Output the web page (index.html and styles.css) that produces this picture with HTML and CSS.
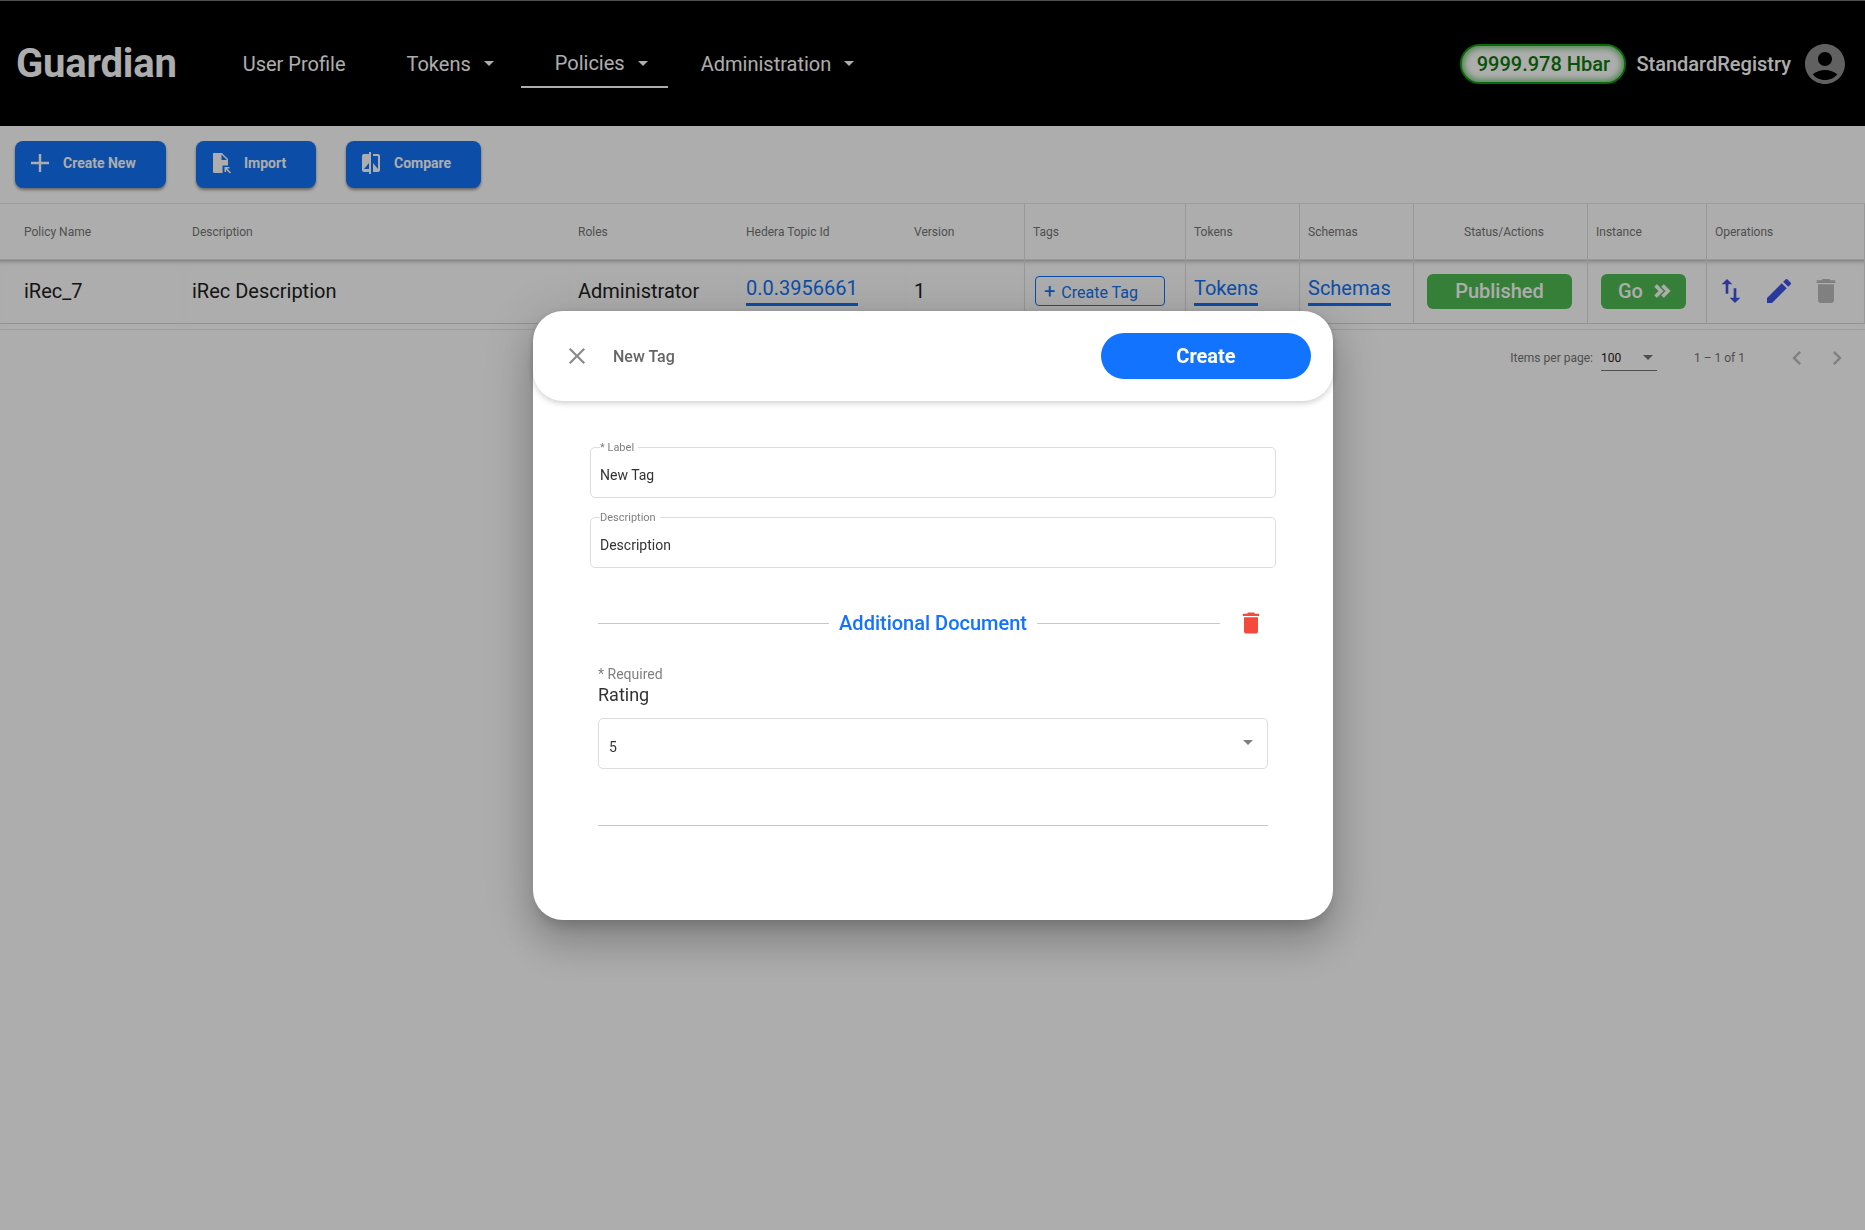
FILE: index.html
```html
<!DOCTYPE html>
<html lang="en">
  <head>
    <meta charset="UTF-8" />
    <title>Guardian</title>
    <link rel="stylesheet" href="styles.css">
  </head>
  <body>
    <header class="topbar">
      <div class="logo">Guardian</div>
      <nav class="nav">
        <a class="nav-item nav-profile">User Profile</a>
        <a class="nav-item nav-tokens">Tokens<span class="caret"></span></a>
        <a class="nav-item nav-policies">Policies<span class="caret"></span></a>
        <a class="nav-item nav-admin">Administration<span class="caret"></span></a>
      </nav>
      <div class="account">
        <div class="balance">9999.978 Hbar</div>
        <div class="username">StandardRegistry</div>
        <svg class="avatar" viewBox="2 2 20 20"><path d="M12 2C6.48 2 2 6.48 2 12s4.48 10 10 10 10-4.48 10-10S17.52 2 12 2zm0 4c1.93 0 3.5 1.57 3.5 3.5S13.93 13 12 13s-3.5-1.57-3.5-3.5S10.07 6 12 6zm0 14c-2.03 0-4.43-.82-6.14-2.88C7.55 15.8 9.68 15 12 15s4.45.8 6.14 2.12C16.43 19.18 14.03 20 12 20z"/></svg>
      </div>
    </header>

    <div class="toolbar">
      <button class="tool-btn btn-create" type="button">
        <svg viewBox="0 0 24 24"><path d="M21 13.200h-7.800V21h-2.400v-7.800H3v-2.400h7.800V3h2.400v7.800H21z"/></svg>
        Create New
      </button>
      <button class="tool-btn btn-import" type="button">
        <svg viewBox="0 0 24 24"><path fill-rule="evenodd" d="M4 2h9l6 6v6.500h-5.500V22H5.500C4.600 22 4 21.400 4 20.500zM12.500 3.500V9H18z"/><path d="M15.500 16h5v1.600h-2.300l3.800 3.800-1.100 1.100-3.800-3.800V21h-1.600z"/></svg>
        Import
      </button>
      <button class="tool-btn btn-compare" type="button">
        <svg viewBox="0 0 24 24"><path d="M10 3H5c-1.100 0-2 .9-2 2v14c0 1.100.9 2 2 2h5v2h2V1h-2v2zm0 15H5l5-6v6zm9-15h-5v2h5v13l-5-6v9h5c1.100 0 2-.9 2-2V5c0-1.100-.9-2-2-2z"/></svg>
        Compare
      </button>
    </div>

    <table class="policies">
      <colgroup>
        <col class="col-name" /><col class="col-desc" /><col class="col-roles" /><col class="col-topic" />
        <col class="col-version" /><col class="col-tags" /><col class="col-tokens" /><col class="col-schemas" />
        <col class="col-status" /><col class="col-instance" /><col class="col-ops" />
      </colgroup>
      <thead>
        <tr>
          <th class="first">Policy Name</th>
          <th>Description</th>
          <th>Roles</th>
          <th>Hedera Topic Id</th>
          <th>Version</th>
          <th class="cell-line">Tags</th>
          <th class="cell-line">Tokens</th>
          <th class="cell-line">Schemas</th>
          <th class="cell-line status-head">Status/Actions</th>
          <th class="cell-line">Instance</th>
          <th class="cell-line">Operations</th>
        </tr>
      </thead>
      <tbody>
        <tr>
          <td class="first">iRec_7</td>
          <td>iRec Description</td>
          <td>Administrator</td>
          <td><a class="link">0.0.3956661</a></td>
          <td>1</td>
          <td class="cell-line tags-cell">
            <button class="tag-btn" type="button"><span class="tag-plus">+</span> Create Tag</button>
          </td>
          <td class="cell-line"><a class="link">Tokens</a></td>
          <td class="cell-line"><a class="link">Schemas</a></td>
          <td class="cell-line status-cell"><button class="green-btn published" type="button">Published</button></td>
          <td class="cell-line instance-cell">
            <button class="green-btn go" type="button">
              Go
              <svg viewBox="0 0 24 24"><path d="M6.410 5L4 7.400 8.600 12 4 16.600 6.410 19l7-7z"/><path d="M14 5l-2.400 2.400 4.600 4.600-4.600 4.600L14 19l7-7z"/></svg>
            </button>
          </td>
          <td class="cell-line ops-cell">
            <div class="ops">
              <svg class="op-swap" viewBox="0 0 24 24"><path d="M16 17.010V10h-2v7.010h-3L15 21l4-3.990h-3zM9 3L5 6.990h3V14h2V6.990h3L9 3z"/></svg>
              <svg class="op-edit" viewBox="0 0 24 24"><path d="M3 17.250V21h3.750L17.810 9.940l-3.750-3.750L3 17.250zM20.710 7.040c.39-.39.39-1.020 0-1.410l-2.340-2.340c-.39-.39-1.020-.39-1.410 0l-1.830 1.830 3.750 3.750 1.830-1.830z"/></svg>
              <svg class="op-delete" viewBox="0 0 24 24"><path d="M6 19c0 1.100.9 2 2 2h8c1.100 0 2-.9 2-2V7H6v12zM19 4h-3.500l-1-1h-5l-1 1H5v2h14V4z"/></svg>
            </div>
          </td>
        </tr>
      </tbody>
    </table>

    <div class="paginator">
      <span class="page-label">Items per page:</span>
      <div class="page-size">100<span class="caret caret-dark"></span></div>
      <span class="page-range">1 – 1 of 1</span>
      <svg class="page-arrow" viewBox="0 0 24 24"><path d="M15.410 7.410L14 6l-6 6 6 6 1.410-1.410L10.830 12z"/></svg>
      <svg class="page-arrow" viewBox="0 0 24 24"><path d="M8.590 16.590L10 18l6-6-6-6-1.410 1.410L13.170 12z"/></svg>
    </div>

    <div class="backdrop"></div>

    <div class="modal">
      <div class="modal-head">
        <svg class="modal-close" viewBox="0 0 24 24"><path d="M19 6.410L17.590 5 12 10.590 6.410 5 5 6.410 10.590 12 5 17.590 6.410 19 12 13.410 17.590 19 19 17.590 13.410 12z"/></svg>
        <div class="modal-title">New Tag</div>
        <button class="create-btn" type="button">Create</button>
      </div>
      <div class="modal-body">
        <fieldset class="field">
          <legend>* Label</legend>
          <div class="field-value">New Tag</div>
        </fieldset>
        <fieldset class="field">
          <legend>Description</legend>
          <div class="field-value">Description</div>
        </fieldset>

        <div class="doc">
          <div class="doc-head">
            <div class="doc-line"></div>
            <div class="doc-title">Additional Document</div>
            <div class="doc-line doc-line-right"></div>
            <svg class="doc-delete" viewBox="0 0 24 24"><path d="M6 19c0 1.100.9 2 2 2h8c1.100 0 2-.9 2-2V7H6v12zM19 4h-3.500l-1-1h-5l-1 1H5v2h14V4z"/></svg>
          </div>
          <div class="required">* Required</div>
          <div class="rating">Rating</div>
          <div class="select">
            <span class="select-value">5</span>
            <span class="caret caret-gray"></span>
          </div>
          <div class="doc-end"></div>
        </div>
      </div>
    </div>
  </body>
</html>
```

FILE: styles.css
```css
html, body {
  margin: 0;
  height: 100%;
}
body {
  background-color: #fff;
  font-family: Roboto, "Liberation Sans", sans-serif;
  color: #212121;
  overflow: hidden;
}
button {
  font-family: inherit;
  border: none;
  cursor: pointer;
}

/* header */
.topbar {
  display: flex;
  align-items: center;
  height: 125px;
  background-color: #000;
  border-top: 1px solid #777;
  color: #fff;
}
.logo {
  margin-left: 16px;
  font-size: 40px;
  font-weight: 700;
  letter-spacing: -0.2px;
}
.nav {
  display: flex;
  align-self: stretch;
  align-items: center;
  margin-left: 66px;
}
.nav-item {
  display: flex;
  align-items: center;
  font-size: 20px;
}
.nav-tokens {
  margin-left: 61px;
}
.nav-policies {
  margin-left: 27px;
  padding: 0 20px 0 34px;
  height: 47px;
  margin-top: 1px;
  border-bottom: 2px solid #fff;
  box-sizing: border-box;
}
.nav-admin {
  margin-left: 33px;
}
.caret {
  display: inline-block;
  width: 0;
  height: 0;
  margin-left: 13px;
  border-top: 5px solid #fff;
  border-left: 5px solid transparent;
  border-right: 5px solid transparent;
}
.account {
  display: flex;
  align-items: center;
  margin-left: auto;
  margin-right: 20px;
}
.balance {
  box-sizing: border-box;
  width: 166px;
  height: 40px;
  line-height: 36px;
  text-align: center;
  font-size: 20px;
  font-weight: 500;
  color: #0a7a0a;
  background-color: #fff;
  border: 2px solid #0f9d0f;
  border-radius: 20px;
  box-shadow: inset 0 0 6px 2px #6fbf6f;
}
.username {
  margin-left: 10px;
  font-size: 20px;
  font-weight: 500;
}
.avatar {
  width: 40px;
  height: 40px;
  margin-left: 14px;
  fill: #8f8f8f;
}

/* toolbar */
.toolbar {
  display: flex;
  align-items: center;
  gap: 30px;
  box-sizing: border-box;
  height: 78px;
  padding: 0 15px;
  border-bottom: 1px solid #e6e6e6;
}
.tool-btn {
  display: flex;
  align-items: center;
  height: 47px;
  padding: 0 0 4px 13px;
  font-size: 14px;
  font-weight: 700;
  color: #fff;
  background-color: #1273f7;
  border-radius: 8px;
  box-shadow: 0 2px 3px rgba(0, 0, 0, 0.4);
}
.tool-btn svg {
  width: 24px;
  height: 24px;
  margin-right: 11px;
  fill: #fff;
}
.btn-create {
  width: 151px;
}
.btn-import {
  width: 120px;
}
.btn-compare {
  width: 135px;
}

/* table */
.policies {
  width: 100%;
  table-layout: fixed;
  border-collapse: separate;
  border-spacing: 0;
}
.col-name { width: 184px; }
.col-desc { width: 386px; }
.col-roles { width: 168px; }
.col-topic { width: 168px; }
.col-version { width: 118px; }
.col-tags { width: 161px; }
.col-tokens { width: 114px; }
.col-schemas { width: 114px; }
.col-status { width: 174px; }
.col-instance { width: 119px; }
.policies th {
  height: 56px;
  padding: 0 0 0 8px;
  box-sizing: border-box;
  text-align: left;
  font-size: 12px;
  font-weight: 400;
  color: #757575;
  border-bottom: 1px solid #e0e0e0;
}
.policies td {
  height: 64px;
  padding: 0 0 1px 8px;
  box-sizing: border-box;
  font-size: 20px;
  color: #212121;
  border-bottom: 1px solid #d8d8d8;
  box-shadow: inset 0 6px 5px -5px rgba(0, 0, 0, 0.35);
}
.policies .first {
  padding-left: 24px;
}
.policies .cell-line {
  border-left: 1px solid #e0e0e0;
}
.policies .status-head {
  padding-left: 50px;
}
.policies th:last-child,
.policies td:last-child {
  border-right: 1px solid #e0e0e0;
}
.link {
  display: inline-block;
  padding-bottom: 3px;
  color: #1273f7;
  border-bottom: 3px solid #1273f7;
}
.policies .tags-cell {
  padding-left: 10px;
}
.tag-btn {
  display: block;
  box-sizing: border-box;
  width: 130px;
  height: 30px;
  padding: 0 8px;
  text-align: left;
  font-size: 16px;
  color: #1273f7;
  background-color: #fff;
  border: 1px solid #1273f7;
  border-radius: 4px;
}
.tag-plus {
  font-size: 20px;
  margin-right: 2px;
}
.green-btn {
  display: flex;
  align-items: center;
  justify-content: center;
  height: 35px;
  padding: 0;
  font-size: 20px;
  font-weight: 500;
  color: #fff;
  background-color: #50bb55;
  border-radius: 6px;
}
.policies .status-cell {
  padding-left: 13px;
}
.published {
  width: 145px;
}
.policies .instance-cell {
  padding-left: 13px;
}
.go {
  width: 85px;
  gap: 8px;
  padding-left: 4px;
}
.go svg {
  width: 22px;
  height: 22px;
  fill: #fff;
  stroke: #fff;
  stroke-width: 0.8;
}
.ops {
  display: flex;
  align-items: center;
  gap: 15.5px;
}
.ops svg {
  width: 32px;
  height: 32px;
}
.op-swap,
.op-edit {
  fill: #3f51e8;
}
.op-delete {
  fill: #bdbdbd;
}

/* paginator */
.paginator {
  display: flex;
  align-items: center;
  height: 56px;
  margin-top: 5px;
  padding-right: 14px;
  justify-content: flex-end;
  border-top: 1px solid #e6e6e6;
  font-size: 12px;
  color: #757575;
}
.page-size {
  display: flex;
  align-items: center;
  justify-content: space-between;
  box-sizing: border-box;
  width: 56px;
  height: 26px;
  margin-left: 8px;
  padding: 0 4px 0 0;
  color: #212121;
  border-bottom: 1px solid #757575;
}
.caret-dark {
  border-top-color: #757575;
}
.page-range {
  margin-left: 37px;
  margin-right: 26px;
}
.page-arrow {
  width: 28px;
  height: 28px;
  margin-left: 12px;
  fill: #bdbdbd;
}

/* modal */
.backdrop {
  position: fixed;
  inset: 0;
  background-color: rgba(0, 0, 0, 0.32);
}
.modal {
  position: absolute;
  left: 533px;
  top: 311px;
  width: 800px;
  height: 609px;
  background-color: #fff;
  border-radius: 30px;
  box-shadow: 0 11px 15px -7px rgba(0, 0, 0, 0.2), 0 24px 38px 3px rgba(0, 0, 0, 0.14), 0 9px 46px 8px rgba(0, 0, 0, 0.12);
}
.modal-head {
  display: flex;
  align-items: center;
  box-sizing: border-box;
  height: 90px;
  padding: 0 22px 0 32px;
  border-radius: 30px;
  box-shadow: 0 2px 6px rgba(0, 0, 0, 0.2);
}
.modal-close {
  width: 24px;
  height: 24px;
  margin-right: 24px;
  fill: #8c8c8c;
  transform: scale(1.15);
}
.modal-title {
  font-size: 16px;
  font-weight: 500;
  color: #666;
}
.create-btn {
  width: 210px;
  height: 46px;
  margin-left: auto;
  font-size: 20px;
  font-weight: 700;
  color: #fff;
  background-color: #1173ff;
  border-radius: 23px;
}
.modal-body {
  padding: 41px 57px 0 57px;
}
.field {
  box-sizing: border-box;
  height: 56px;
  margin: 0 0 14px;
  padding: 0 9px;
  border: 1px solid #ddd;
  border-radius: 5px;
}
.field legend {
  margin-left: 0;
  padding: 0 4px 0 0;
  font-size: 11px;
  line-height: 11px;
  color: #808080;
}
.field-value {
  margin-top: 12px;
  font-size: 14px;
  line-height: 20px;
  color: #333;
}
.doc {
  padding: 0 8px;
}
.doc-head {
  display: flex;
  align-items: center;
  height: 30px;
  margin-top: 40px;
}
.doc-line {
  flex: 1;
  height: 1px;
  background-color: #c8c8c8;
}
.doc-line-right {
  flex: 0 0 183px;
}
.doc-title {
  margin: 0 10px;
  font-size: 20px;
  font-weight: 500;
  color: #1173ff;
}
.doc-delete {
  width: 28px;
  height: 28px;
  margin: 0 3px 0 17px;
  fill: #f44a3e;
}
.required {
  margin-top: 27px;
  font-size: 14px;
  line-height: 18px;
  color: #808080;
}
.rating {
  font-size: 18px;
  line-height: 24px;
  color: #333;
}
.select {
  display: flex;
  align-items: center;
  justify-content: space-between;
  box-sizing: border-box;
  height: 51px;
  margin-top: 11px;
  padding: 0 14px 0 10px;
  border: 1px solid #ddd;
  border-radius: 5px;
}
.select-value {
  margin-top: 7px;
  font-size: 14px;
  color: #333;
}
.caret-gray {
  border-top-color: #808080;
  margin-top: -3px;
}
.doc-end {
  height: 1px;
  margin-top: 56px;
  background-color: #c8c8c8;
}
```
